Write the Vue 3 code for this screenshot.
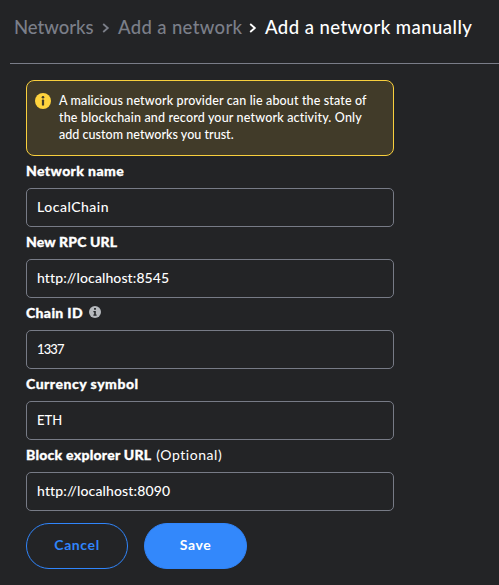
<script setup>
import { reactive } from 'vue'

const fields = reactive([
  { id: 'name', label: 'Network name', value: 'LocalChain' },
  { id: 'rpc', label: 'New RPC URL', value: 'http://localhost:8545' },
  { id: 'chain', label: 'Chain ID', value: '1337', info: true },
  { id: 'symbol', label: 'Currency symbol', value: 'ETH' },
  { id: 'explorer', label: 'Block explorer URL', value: 'http://localhost:8090', optional: true }
])
</script>

<template>
  <main class="page">
    <nav class="crumbs">
      <span class="c-networks">Networks</span>
      <svg class="chevron" viewBox="0 0 8 12"><path d="M1.2 2 5.8 6 1.2 10" /></svg>
      <span class="c-add">Add a network</span>
      <svg class="chevron current" viewBox="0 0 8 12"><path d="M1.2 2 5.8 6 1.2 10" /></svg>
      <span class="c-manual current">Add a network manually</span>
    </nav>
    <form class="form" @submit.prevent>
      <div class="warning">
        <svg class="warning-icon" viewBox="0 0 16 16">
          <circle cx="8" cy="8" r="8" fill="#ffd33d" />
          <circle cx="8" cy="4.3" r="1.3" fill="#413b29" />
          <rect x="6.9" y="6.6" width="2.2" height="6" rx=".6" fill="#413b29" />
        </svg>
        <p>
          <span class="w1">A malicious network provider can lie about the state of</span><br>
          <span class="w2">the blockchain and record your network activity. Only</span><br>
          <span class="w3">add custom networks you trust.</span>
        </p>
      </div>
      <div v-for="f in fields" :key="f.id" class="field">
        <label :for="f.id">
          <span :class="['label', 'l-' + f.id]">{{ f.label }}</span>
          <span v-if="f.optional" class="optional">(Optional)</span>
          <svg v-if="f.info" class="info" viewBox="0 0 12 12">
            <circle cx="6" cy="6" r="6" fill="#b6b9bd" />
            <path d="M5.1 2.1h1.8v1.7H5.1zM4.4 4.9h2.4v3.5h.8v1.3H4.4V8.4h.8V6.2h-.8z" fill="#232527" />
          </svg>
        </label>
        <input :id="f.id" v-model="f.value" :class="'i-' + f.id" type="text" spellcheck="false">
      </div>
      <div class="actions">
        <button type="button" class="cancel">Cancel</button>
        <button type="submit" class="save">Save</button>
      </div>
    </form>
  </main>
</template>

<style>
body {
  background: #232426;
}
</style>

<style scoped>
.page {
  box-sizing: border-box;
  height: 585px;
  overflow: hidden;
  background: #232426;
  color: #fff;
  font-family: Lato, "Open Sans", sans-serif;
}
.crumbs {
  display: flex;
  align-items: center;
  box-sizing: border-box;
  height: 64px;
  margin-left: 10px;
  padding: 0 0 10px 4px;
  border-bottom: 1px solid #7a7d88;
  font-size: 18.5px;
  font-weight: 500;
  line-height: 24px;
  color: #7b7f89;
  white-space: nowrap;
}
.crumbs span { flex: none; }
.c-networks { width: 88px; }
.c-add { width: 131px; letter-spacing: .35px; }
.c-manual { letter-spacing: .45px; }
.crumbs .current { color: #fff; }
.chevron {
  flex: none;
  width: 8px;
  height: 12px;
  margin: 3px 8px 0 0;
  fill: none;
  stroke: currentColor;
  stroke-width: 1.8;
}
.form {
  width: 368px;
  margin: 16px 0 0 26px;
}
.warning {
  display: flex;
  box-sizing: border-box;
  height: 76px;
  padding: 12px 8px;
  border: 1px solid #f8cf3d;
  border-radius: 8px;
  background: #413b29;
}
.warning-icon {
  flex: none;
  width: 16px;
  height: 16px;
  margin-right: 8px;
}
.warning p {
  margin: -1px 0 0;
  font-size: 12.5px;
  font-weight: 500;
  line-height: 17px;
  white-space: nowrap;
}
.w1 { letter-spacing: .14px; }
.w2 { letter-spacing: .17px; }
.w3 { letter-spacing: .03px; }
.field label {
  display: flex;
  align-items: center;
  height: 32px;
  padding-bottom: 2px;
  box-sizing: border-box;
  font-size: 14px;
  line-height: 18px;
  white-space: nowrap;
}
.label { font-weight: 900; -webkit-text-stroke: .3px currentColor; }
.l-name { letter-spacing: .4px; }
.l-rpc { letter-spacing: .15px; }
.l-chain { letter-spacing: .35px; }
.l-symbol { letter-spacing: .5px; }
.l-explorer { letter-spacing: .25px; }
.optional { margin-left: 5px; letter-spacing: .55px; }
.info {
  width: 12px;
  height: 12px;
  margin: -2px 0 0 6px;
}
input {
  display: block;
  box-sizing: border-box;
  width: 100%;
  height: 39px;
  padding: 0 10px 2px;
  border: 1px solid #777b86;
  border-radius: 5px;
  outline: none;
  background: transparent;
  color: #fff;
  font: 500 14px Lato, "Open Sans", sans-serif;
}
.i-name { letter-spacing: .5px; }
.i-rpc { letter-spacing: .1px; }
.i-chain { font-size: 13px; letter-spacing: -.9px; }
.i-symbol { font-size: 13px; }
.i-explorer { letter-spacing: .15px; }
.actions {
  display: flex;
  gap: 16px;
  margin-top: 12px;
}
button {
  box-sizing: border-box;
  height: 46px;
  padding: 0 0 4px;
  border: 1px solid #3085fb;
  border-radius: 23px;
  font: 700 14px Lato, "Open Sans", sans-serif;
  letter-spacing: .6px;
}
.cancel { width: 102px; background: transparent; color: #3085fb; }
.save { width: 103px; background: #3388fb; color: #fff; }
</style>
